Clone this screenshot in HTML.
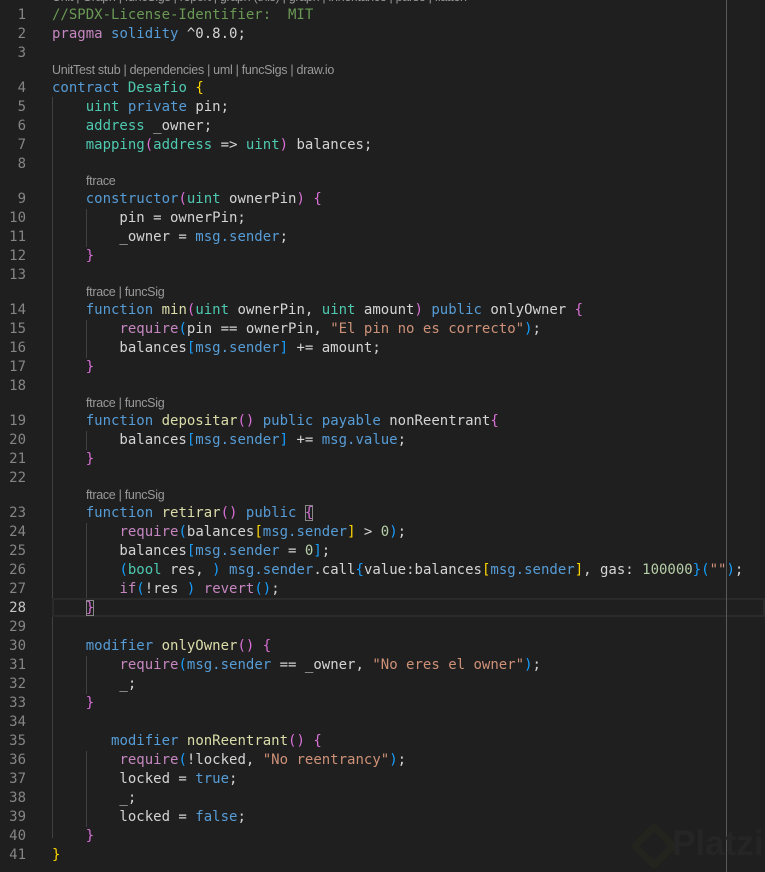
<!DOCTYPE html>
<html><head><meta charset="utf-8">
<style>
html,body{margin:0;padding:0;background:#1f1f1f;width:765px;height:872px;overflow:hidden;position:relative}
.ed{position:absolute;left:0;top:-10.5px;width:765px}
.r{height:19px;line-height:19px;position:relative;white-space:pre;font-family:"DejaVu Sans Mono","Liberation Mono",monospace;font-size:14px;color:#d4d4d4}
.ln{position:absolute;left:0;width:26px;text-align:right;color:#858585}
.cd{position:absolute;left:52px}
.lens{height:16px;line-height:16px;position:relative;font-family:"Liberation Sans",sans-serif;font-size:12.5px;color:#999;white-space:pre;letter-spacing:-0.3px}
.lens .cd{top:-1px}
.i4{padding-left:34px}
.k{color:#569cd6}.t{color:#4ec9b0}.c{color:#c586c0}.f{color:#dcdcaa}.s{color:#ce9178}.n{color:#b5cea8}.g{color:#6a9955}
.b1{color:#ffd700}.b2{color:#da70d6}.b3{color:#179fff}
.box{outline:1px solid #888;outline-offset:-1px}
.guide{position:absolute;width:1px;background:#404040}
.cur{position:absolute;left:52px;right:0;height:15px;border:2px solid #2a2a2a}
.ruler{position:absolute;left:726px;top:0;width:1px;height:872px;background:#5a5a5a}
.wm{position:absolute;left:672px;top:824px;font-family:"Liberation Sans",sans-serif;font-size:35px;font-weight:bold;color:#252525}
.wmi{position:absolute;left:637px;top:829px;width:20px;height:20px;border:7px solid #22241d;transform:rotate(45deg);border-radius:4px}
</style></head><body>
<div class="guide" style="left:52px;top:97px;height:741px"></div>
<div class="guide" style="left:86px;top:209px;height:38px"></div>
<div class="guide" style="left:86px;top:320px;height:38px"></div>
<div class="guide" style="left:86px;top:431px;height:19px"></div>
<div class="guide" style="left:86px;top:523px;height:76px"></div>
<div class="guide" style="left:86px;top:656px;height:38px"></div>
<div class="guide" style="left:86px;top:751px;height:76px"></div>
<div class="cur" style="top:598px"></div>
<div class="ed">
<div class="lens"><span class="cd">Unit | Graph | funcSigs | report | graph (this) | graph | inheritance | parse | flatten</span></div>
<div class="r"><span class="ln">1</span><span class="cd g">//SPDX-License-Identifier:  MIT</span></div>
<div class="r"><span class="ln">2</span><span class="cd"><span class="c">pragma</span> <span class="k">solidity</span> ^0.8.0;</span></div>
<div class="r"><span class="ln">3</span></div>
<div class="lens"><span class="cd">UnitTest stub | dependencies | uml | funcSigs | draw.io</span></div>
<div class="r"><span class="ln">4</span><span class="cd"><span class="k">contract</span> <span class="t">Desafio</span> <span class="b1">{</span></span></div>
<div class="r"><span class="ln">5</span><span class="cd">    <span class="t">uint</span> <span class="k">private</span> pin;</span></div>
<div class="r"><span class="ln">6</span><span class="cd">    <span class="t">address</span> _owner;</span></div>
<div class="r"><span class="ln">7</span><span class="cd">    <span class="t">mapping</span><span class="b2">(</span><span class="t">address</span> =&gt; <span class="t">uint</span><span class="b2">)</span> balances;</span></div>
<div class="r"><span class="ln">8</span></div>
<div class="lens"><span class="cd i4">ftrace</span></div>
<div class="r"><span class="ln">9</span><span class="cd">    <span class="k">constructor</span><span class="b2">(</span><span class="t">uint</span> ownerPin<span class="b2">)</span> <span class="b2">{</span></span></div>
<div class="r"><span class="ln">10</span><span class="cd">        pin = ownerPin;</span></div>
<div class="r"><span class="ln">11</span><span class="cd">        _owner = <span class="k">msg.sender</span>;</span></div>
<div class="r"><span class="ln">12</span><span class="cd">    <span class="b2">}</span></span></div>
<div class="r"><span class="ln">13</span></div>
<div class="lens"><span class="cd i4">ftrace | funcSig</span></div>
<div class="r"><span class="ln">14</span><span class="cd">    <span class="k">function</span> <span class="f">min</span><span class="b2">(</span><span class="t">uint</span> ownerPin, <span class="t">uint</span> amount<span class="b2">)</span> <span class="k">public</span> onlyOwner <span class="b2">{</span></span></div>
<div class="r"><span class="ln">15</span><span class="cd">        <span class="c">require</span><span class="b3">(</span>pin == ownerPin, <span class="s">"El pin no es correcto"</span><span class="b3">)</span>;</span></div>
<div class="r"><span class="ln">16</span><span class="cd">        balances<span class="b3">[</span><span class="k">msg.sender</span><span class="b3">]</span> += amount;</span></div>
<div class="r"><span class="ln">17</span><span class="cd">    <span class="b2">}</span></span></div>
<div class="r"><span class="ln">18</span></div>
<div class="lens"><span class="cd i4">ftrace | funcSig</span></div>
<div class="r"><span class="ln">19</span><span class="cd">    <span class="k">function</span> <span class="f">depositar</span><span class="b2">()</span> <span class="k">public</span> <span class="k">payable</span> nonReentrant<span class="b2">{</span></span></div>
<div class="r"><span class="ln">20</span><span class="cd">        balances<span class="b3">[</span><span class="k">msg.sender</span><span class="b3">]</span> += <span class="k">msg.value</span>;</span></div>
<div class="r"><span class="ln">21</span><span class="cd">    <span class="b2">}</span></span></div>
<div class="r"><span class="ln">22</span></div>
<div class="lens"><span class="cd i4">ftrace | funcSig</span></div>
<div class="r"><span class="ln">23</span><span class="cd">    <span class="k">function</span> <span class="f">retirar</span><span class="b2">()</span> <span class="k">public</span> <span class="b2 box">{</span></span></div>
<div class="r"><span class="ln">24</span><span class="cd">        <span class="c">require</span><span class="b3">(</span>balances<span class="b1">[</span><span class="k">msg.sender</span><span class="b1">]</span> &gt; <span class="n">0</span><span class="b3">)</span>;</span></div>
<div class="r"><span class="ln">25</span><span class="cd">        balances<span class="b3">[</span><span class="k">msg.sender</span> = <span class="n">0</span><span class="b3">]</span>;</span></div>
<div class="r"><span class="ln">26</span><span class="cd">        <span class="b3">(</span><span class="t">bool</span> res, <span class="b3">)</span> <span class="k">msg.sender</span>.call<span class="b3">{</span>value:balances<span class="b1">[</span><span class="k">msg.sender</span><span class="b1">]</span>, gas: <span class="n">100000</span><span class="b3">}(</span><span class="s">""</span><span class="b3">)</span>;</span></div>
<div class="r"><span class="ln">27</span><span class="cd">        <span class="c">if</span><span class="b3">(</span>!res <span class="b3">)</span> <span class="c">revert</span><span class="b3">()</span>;</span></div>
<div class="r"><span class="ln" style="color:#c6c6c6">28</span><span class="cd">    <span class="b2 box">}</span></span></div>
<div class="r"><span class="ln">29</span></div>
<div class="r"><span class="ln">30</span><span class="cd">    <span class="k">modifier</span> <span class="f">onlyOwner</span><span class="b2">()</span> <span class="b2">{</span></span></div>
<div class="r"><span class="ln">31</span><span class="cd">        <span class="c">require</span><span class="b3">(</span><span class="k">msg.sender</span> == _owner, <span class="s">"No eres el owner"</span><span class="b3">)</span>;</span></div>
<div class="r"><span class="ln">32</span><span class="cd">        _;</span></div>
<div class="r"><span class="ln">33</span><span class="cd">    <span class="b2">}</span></span></div>
<div class="r"><span class="ln">34</span></div>
<div class="r"><span class="ln">35</span><span class="cd">       <span class="k">modifier</span> <span class="f">nonReentrant</span><span class="b2">()</span> <span class="b2">{</span></span></div>
<div class="r"><span class="ln">36</span><span class="cd">        <span class="c">require</span><span class="b3">(</span>!locked, <span class="s">"No reentrancy"</span><span class="b3">)</span>;</span></div>
<div class="r"><span class="ln">37</span><span class="cd">        locked = <span class="k">true</span>;</span></div>
<div class="r"><span class="ln">38</span><span class="cd">        _;</span></div>
<div class="r"><span class="ln">39</span><span class="cd">        locked = <span class="k">false</span>;</span></div>
<div class="r"><span class="ln">40</span><span class="cd">    <span class="b2">}</span></span></div>
<div class="r"><span class="ln">41</span><span class="cd"><span class="b1">}</span></span></div>
</div>
<div class="ruler"></div>
<div class="wmi"></div>
<div class="wm">Platzi</div>
</body></html>
